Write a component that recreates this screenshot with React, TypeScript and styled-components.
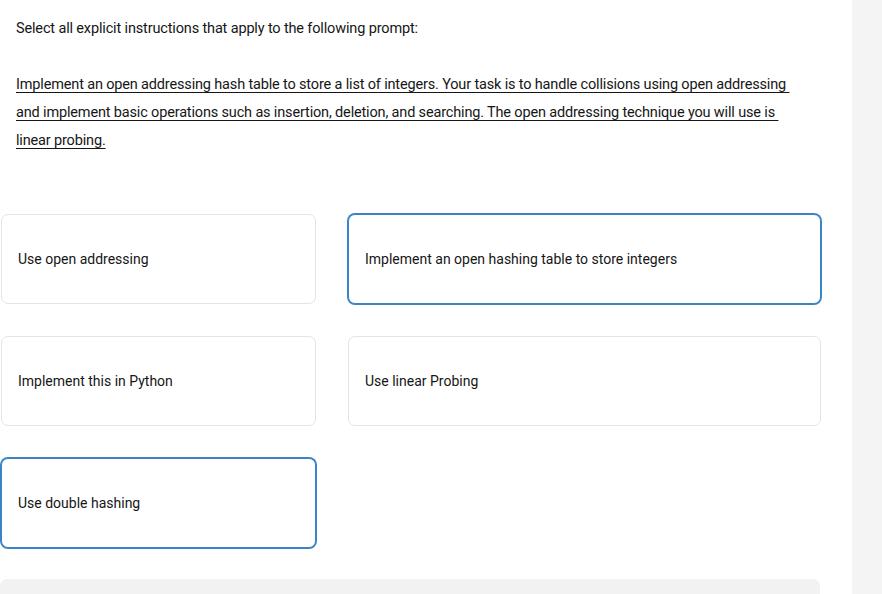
import React from "react";
import styled, { createGlobalStyle, css } from "styled-components";

const Global = createGlobalStyle`
  html, body { margin: 0; padding: 0; background: #ffffff; }
  body { font-family: Roboto, "Liberation Sans", sans-serif; color: #161616; }
  * { box-sizing: border-box; }
`;

const Page = styled.div`
  display: flex;
  width: 882px;
  height: 594px;
  overflow: hidden;
`;

const Main = styled.main`
  flex: 0 0 852px;
  display: flex;
  flex-direction: column;
`;

const Side = styled.aside`
  flex: 1;
  background: #f4f4f4;
`;

const Intro = styled.div`
  padding: 15px 0 0 16px;
`;

const Title = styled.p`
  margin: 0;
  font-size: 14.5px;
  letter-spacing: -0.15px;
  line-height: 28px;
`;

const Prompt = styled.p`
  margin: 28px 0 0 0;
  font-size: 14.5px;
  letter-spacing: -0.16px;
  line-height: 28px;
`;

const Line = styled.span`
  text-decoration: underline;
  text-decoration-thickness: 1px;
  text-underline-offset: 3px;
`;

const Grid = styled.div`
  display: grid;
  grid-template-columns: 315px 473px;
  column-gap: 32px;
  row-gap: 32px;
  padding-left: 1px;
  margin-top: 59px;
`;

const Card = styled.div<{ $selected?: boolean }>`
  height: 90px;
  display: flex;
  align-items: center;
  padding: 0 16px;
  border: 1px solid #e4e4e4;
  border-radius: 7px;
  background: #ffffff;
  font-size: 14px;
  ${(p) =>
    p.$selected &&
    css`
      border-color: #3b84c4;
      box-shadow: 0 0 0 1px #3b84c4;
    `}
`;

const Footer = styled.div`
  margin-top: 31px;
  width: 820px;
  height: 40px;
  background: #f2f2f2;
  border-radius: 7px 7px 0 0;
`;

const options = [
  { label: "Use open addressing", selected: false },
  { label: "Implement an open hashing table to store integers", selected: true },
  { label: "Implement this in Python", selected: false },
  { label: "Use linear Probing", selected: false },
  { label: "Use double hashing", selected: true },
];

export default function App() {
  return (
    <Page>
      <Global />
      <Main>
        <Intro>
          <Title>Select all explicit instructions that apply to the following prompt:</Title>
          <Prompt>
            <Line>
              Implement an open addressing hash table to store a list of integers. Your task is to handle collisions using open addressing{"\u00a0"}
            </Line>
            <br />
            <Line>
              and implement basic operations such as insertion, deletion, and searching. The open addressing technique you will use is{"\u00a0"}
            </Line>
            <br />
            <Line>linear probing.</Line>
          </Prompt>
        </Intro>
        <Grid>
          {options.map((o) => (
            <Card key={o.label} $selected={o.selected}>
              {o.label}
            </Card>
          ))}
        </Grid>
        <Footer />
      </Main>
      <Side />
    </Page>
  );
}
